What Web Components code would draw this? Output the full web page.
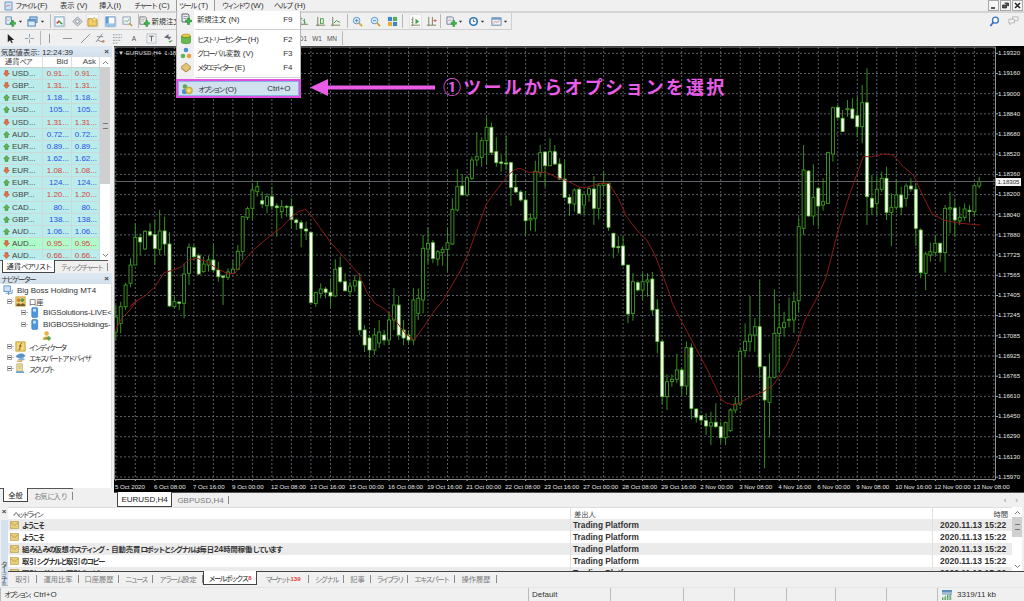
<!DOCTYPE html>
<html lang="ja"><head><meta charset="utf-8"><title>MT4</title>
<style>html,body{margin:0;padding:0;background:#f0f0f0}</style></head>
<body><mt-app></mt-app>
<script>
const FS=7.3;
const jp=(s,adv=5.6)=>s.replace(/[^\x00-\x7f]+/g,m=>m.replace(/[\u3040-\u30ff]+|[^\u3040-\u30ff]+/g,r=>/[\u3040-\u30ff]/.test(r)?`<span style="font-size:${FS}px;letter-spacing:${(adv-FS).toFixed(2)}px">${r}</span>`:`<span style="font-size:${FS}px">${r}</span>`));
const svg=(w,h,b)=>`<svg width="${w}" height="${h}" viewBox="0 0 12 12" style="display:block;flex:none">${b}</svg>`;
const plus=`<path d="M7.5 5h2v2h2v2h-2v2.5h-2V9h-2V7h2z" fill="#3fb54a" stroke="#1d7d2b" stroke-width=".5"/>`;
const mag=(c)=>`<circle cx="5" cy="5" r="3.6" fill="#d7e9f7" stroke="#5c93c4"/><path d="M7.5 7.5l3.5 3.5" stroke="#d9a02c" stroke-width="1.8"/><path d="M3.3 5h3.4${c?'M5 3.3v3.4':''}" stroke="#3b77ad" stroke-width=".8"/>`;
const IC={
 newchart:svg(11,11,`<path d="M1 1h6v8H1z" fill="#e6f1fb" stroke="#5d87ad"/><path d="M2 4l2 1 2-2" stroke="#c55" fill="none" stroke-width=".6"/>`+plus),
 profiles:svg(11,11,`<rect x="3" y="1" width="8" height="6" fill="#a9cbea" stroke="#4c7eb0"/><rect x="1" y="4" width="8" height="7" fill="#dce9f6" stroke="#4c7eb0"/><rect x="1" y="4" width="8" height="2" fill="#5f93c8"/>`),
 watch:svg(11,11,`<rect x="1" y="1" width="10" height="10" fill="#f4f9fd" stroke="#6c9abf"/><path d="M3 8l3-3" stroke="#d9453a" stroke-width="1.8"/><path d="M6 6l3 3" stroke="#38a13e" stroke-width="1.8"/>`),
 nav:svg(11,11,`<path d="M6 1l5 5-5 5-5-5z" fill="#d9dde0" stroke="#8b9299"/><circle cx="6" cy="6" r="2" fill="#f5f5f5" stroke="#8b9299"/>`),
 fav:svg(11,11,`<path d="M1 3h4l1 1h5v7H1z" fill="#f2cf6c" stroke="#b98d2b"/><path d="M8 1l1 2h2L9.500 4.500 10 7 8 5.600 6 7l.5-2.500L5 3h2z" fill="#f9e38a" stroke="#b98d2b" stroke-width=".5"/>`),
 term:svg(11,11,`<rect x="1" y="1" width="10" height="10" fill="#fff" stroke="#4c84b8"/><rect x="1" y="1" width="3" height="10" fill="#5b9bd5"/><rect x="1" y="8" width="10" height="3" fill="#9cc4e6"/>`),
 tester:svg(11,11,`<rect x="1" y="1" width="8" height="8" fill="#eef3f7" stroke="#8aa0b3"/><path d="M2 7l2-2 2 1 2-3" stroke="#4b9a4f" fill="none" stroke-width=".7"/><path d="M8 8l3 3" stroke="#c99a2e" stroke-width="1.6"/>`),
 order:svg(11,11,`<path d="M1 1h6l1 1v7H1z" fill="#f3f3f3" stroke="#777"/><path d="M2.500 3.500h4M2.500 5.500h3" stroke="#888" stroke-width=".7"/>`+plus),
 bar:svg(11,11,`<path d="M3 1v10M1 9h10" stroke="#6f7f55" fill="none"/><path d="M3 3h2M7 3v6M5.500 5H7M7 7h1.500" stroke="#4b9a4f" fill="none"/>`),
 candle:svg(11,11,`<path d="M3 1v10M1 10h10" stroke="#6f7f55"/><rect x="6" y="3" width="3" height="5" fill="#fff" stroke="#3a9a3a"/>`),
 line:svg(11,11,`<path d="M3 1v10M1 10h10" stroke="#6f7f55"/><path d="M4 8l3-3 4 2" stroke="#3a9a3a" fill="none"/>`),
 zin:svg(11,11,mag(1)), zout:svg(11,11,mag(0)),
 tile:svg(11,11,`<rect x="1" y="1" width="4.500" height="4.500" fill="#3f86c8"/><rect x="6.500" y="1" width="4.500" height="4.500" fill="#59ae55"/><rect x="1" y="6.500" width="4.500" height="4.500" fill="#e2b33c"/><rect x="6.500" y="6.500" width="4.500" height="4.500" fill="#3f86c8"/>`),
 sb:svg(11,11,`<path d="M3 1v10M1 10h10M3 4H1.500M3 7H1.500" stroke="#7d7d5a" fill="none"/><path d="M6 3l4 3-4 3z" fill="#3aa34a"/>`),
 as:svg(11,11,`<path d="M3 1v10M1 10h10M7 1v9" stroke="#7d7d5a" fill="none"/><path d="M8 5h3M9.500 3.500L11 5 9.500 6.500" stroke="#d9534a" fill="none"/>`),
 ind:svg(11,11,`<path d="M1 1h6l1 1v7H1z" fill="#e8edf2" stroke="#6e8296"/><path d="M2 6l2-2 2 1" stroke="#b55" fill="none" stroke-width=".6"/>`+plus),
 clock:svg(11,11,`<circle cx="6" cy="6" r="5" fill="#2e78b8"/><circle cx="6" cy="6" r="3.200" fill="#f3f7fb"/><path d="M6 3.700V6h2" stroke="#333" fill="none" stroke-width=".7"/>`),
 tpl:svg(11,11,`<rect x="1" y="2" width="10" height="8" fill="#eef3f8" stroke="#5c86ad"/><rect x="1" y="2" width="10" height="2" fill="#6d9bc6"/><path d="M2.500 8l2-2 2 1 3-2" stroke="#d9534a" fill="none" stroke-width=".7"/>`),
 caret:svg(5,5,`<path d="M2 4h8l-4 5z" fill="#333"/>`),
 cursor:svg(11,11,`<path d="M3 1v9l2.500-2 1.500 3 1.500-.7L7 7.500h3z" fill="#222"/>`),
 cross:svg(11,11,`<path d="M6 1v4M6 7v4M1 6h4M7 6h4" stroke="#8b9aa8"/>`),
 vl:svg(11,11,`<path d="M6 1v10" stroke="#8a8f94"/>`), hl:svg(11,11,`<path d="M1 6h10" stroke="#8a8f94"/>`),
 tl:svg(11,11,`<path d="M1 11L11 1" stroke="#8a8f94"/>`),
 fib:svg(11,11,`<path d="M1 10L8 1M3 8l6 2M2 4h7" stroke="#7d8790" fill="none"/><circle cx="9" cy="9" r="1.400" fill="#c98a5a"/>`),
 chan:svg(11,11,`<path d="M1 2h10M1 5h10M1 8h8M1 11h6" stroke="#8b98a3" stroke-dasharray="2 1"/>`),
 tbox:svg(11,11,`<rect x="1" y="1" width="10" height="10" fill="none" stroke="#8b98a3" stroke-dasharray="1 1"/><path d="M3.500 3.500h5M6 3.500V9" stroke="#55606a"/>`),
 arrows:svg(11,11,`<path d="M1 5l5-4v3h3l-2 3H6v-1z" fill="#667"/><path d="M11 8l-4 3V9H5" fill="#3a9a3a"/>`),
 search:svg(11,11,`<circle cx="7" cy="4.500" r="3.200" fill="#fff" stroke="#2f6fc1" stroke-width="1.400"/><path d="M4.500 7L1.500 11" stroke="#2f6fc1" stroke-width="1.800"/>`),
 chat:svg(13,11,`<path d="M5 1h6v4H7L5.500 6.500V5H5z" fill="#f4f4f4" stroke="#b5b5b5"/><path d="M1 3.500h6v4H3.500L2 9.500v-2H1z" fill="#f4f4f4" stroke="#b5b5b5"/>`),
 up:svg(7,7,`<path d="M6 1l5 5-2.500 1v4h-5V7L1 6z" fill="#62b356" stroke="#2d7a2a" stroke-width=".8"/>`),
 dn:svg(7,7,`<path d="M6 11l5-5-2.500-1V1h-5v4L1 6z" fill="#e2704a" stroke="#b5452a" stroke-width=".8"/>`),
 mail:svg(9,8,`<rect x="0" y="1" width="12" height="10" fill="#e8cf7e" stroke="#b89a45"/><path d="M0 2l6 5 6-5" stroke="#a98b3a" fill="none"/>`),
 mNew:svg(12,12,`<path d="M2 1h6l1 1v7H2z" fill="#eceff2" stroke="#667"/><path d="M3.500 3.500h4M3.500 5.500h3" stroke="#778" stroke-width=".7"/>`+plus),
 mHist:svg(12,12,`<ellipse cx="6" cy="3" rx="4.500" ry="2" fill="#e7c93f" stroke="#a48e24" stroke-width=".6"/><path d="M1.500 3v6.500C1.500 11 10.500 11 10.500 9.500V3C10.500 5 1.500 5 1.500 3z" fill="#6ab84e" stroke="#3e8a2b" stroke-width=".6"/>`),
 mGlob:svg(12,12,`<circle cx="6" cy="3" r="2.300" fill="#4a8fd0"/><circle cx="3" cy="9" r="2.300" fill="#5fb55a"/><circle cx="9" cy="9" r="2.300" fill="#e8a13a"/>`),
 mEd:svg(12,12,`<path d="M1 6l5-4 5 4-5 5z" fill="#e5c477" stroke="#a5822f" stroke-width=".7"/><path d="M1 7.500l5 3.500 5-3.500" fill="none" stroke="#a5822f" stroke-width=".7"/>`),
 mOpt:svg(12,12,`<circle cx="4" cy="3.500" r="2.300" fill="#5da85a"/><circle cx="3.500" cy="8.500" r="2.600" fill="#4a8fd0"/><circle cx="8" cy="7.500" r="3.400" fill="#e8c84a" stroke="#a68c24" stroke-width=".6"/><circle cx="8" cy="7.500" r="1.100" fill="#f8f3d5"/>`),
 root:svg(11,11,`<rect x="1" y="1" width="7" height="6" fill="#cfe2f5" stroke="#5f93c8"/><path d="M3 9h7M6 7v4M10 5v4" stroke="#5f93c8" fill="none"/>`),
 acc:svg(11,11,`<rect x="1" y="1" width="10" height="10" fill="#f0d177" stroke="#c29b33"/><circle cx="4" cy="4.500" r="2" fill="#cf7f2f"/><circle cx="8" cy="4.500" r="2" fill="#4e9c48"/><path d="M1.500 11c0-4 5-4 5 0zM6 11c0-4 5-4 5 0z" fill="#7b5b2a"/>`),
 srv:svg(11,11,`<rect x="3" y="0.500" width="6.500" height="11" rx="1.500" fill="#4d97dd" stroke="#2f6fb0" stroke-width=".6"/><rect x="4.500" y="2" width="3" height="3" fill="#cfe6fa"/>`),
 user:svg(10,11,`<circle cx="5.500" cy="3.500" r="2.700" fill="#e8b23c"/><path d="M1 11c0-5 9-5 9 0z" fill="#d69a2a"/><path d="M7 7h2v1.500h1.500v2H9V12H7v-1.500H5.500v-2H7z" fill="#42a84a"/>`),
 indi:svg(11,11,`<rect x="1" y="1" width="10" height="10" fill="#f1d87c" stroke="#c39c34"/><path d="M7.500 2.500C6 2.500 6 4 5.800 5.500L5 9.500H3.800M4.300 5.500h3" fill="none" stroke="#8a5a10"/>`),
 ea:svg(11,11,`<path d="M1 5c3-4 8-4 10-1-2 3-7 3-10 1z" fill="#5a93c8" stroke="#38709f" stroke-width=".5"/><path d="M3 8c2-2 6-2 8 0-2 2-6 2-8 0z" fill="#8cb2d2"/><path d="M2 10h6" stroke="#d7a43a" stroke-width="1.400"/>`),
 scr:svg(11,11,`<path d="M2 1h6v8H2z" fill="#f2e3ac" stroke="#a88f3c" stroke-width=".7"/><path d="M1 10h9" stroke="#4c8fcb" stroke-width="1.500"/><path d="M3.500 3.500h3M3.500 5.500h3" stroke="#a88f3c" stroke-width=".6"/>`),
 net:svg(16,10,`<path d="M0 12V9h1v3zM2 12V8h1v4zM4 12V7h1v5zM6 12V6h1v6zM8 12V5h1v7zM10 12V4h1v8z" fill="#3e8f4a"/><path d="M0 0h12v3H0z" fill="#5b8fc0"/><path d="M0 3h12v3H0z" fill="#87a9c7" opacity=".7"/>`)
};
function def(name,css,html,extra){
 customElements.define(name,class extends HTMLElement{
  constructor(){super();this.attachShadow({mode:'open'});
   this.shadowRoot.innerHTML=`<style>${css}</style>`+(typeof html==='function'?html(this):html);
   if(extra)extra(this.shadowRoot,this);}
 });
}
/* tab */
def('mt-tab',`:host{display:flex;align-items:center;justify-content:center;box-sizing:border-box;height:100%;color:#7a7a7a;white-space:nowrap;
 background:linear-gradient(#8a8a8a,#8a8a8a) no-repeat right center/1px 8px}
 :host([active]){background:#fff;color:#222;border:1px solid #444;border-top:0;margin-top:-1px;height:calc(100% + 1px)}`,`<slot></slot>`);
/* scrollbar */
def('mt-scroll',`:host{display:flex;flex-direction:column;background:#fff;width:var(--w,10px);flex:none;box-sizing:border-box}
 .b{height:var(--bh,10px);display:flex;align-items:center;justify-content:center;background:#fff;flex:none}
 .t{height:var(--th,100px);background:#cfcfcf;display:flex;align-items:center;justify-content:center;flex:none}
 .g{width:5px;height:4px;border-top:1px solid #777;border-bottom:1px solid #777;position:relative}.s{flex:1}`,
 `<div class="b"><svg width="7" height="5" viewBox="0 0 7 5"><path d="M1 4l2.500-2.500L6 4" fill="none" stroke="#777"/></svg></div><div class="t"><div class="g"></div></div><div class="s"></div><div class="b"><svg width="7" height="5" viewBox="0 0 7 5"><path d="M1 1l2.500 2.500L6 1" fill="none" stroke="#777"/></svg></div>`);
/* panel title */
def('mt-title',`:host{display:flex;align-items:center;justify-content:space-between;height:11px;background:linear-gradient(#dfe9f3,#d3e0ec);color:#333;padding:0 3px 0 1px;flex:none;white-space:nowrap}
 b{font:bold 8px "Liberation Sans";color:#444}`,`<span><slot></slot></span><b>×</b>`);
/* menu bar */
def('mt-menubar',`:host{display:flex;height:11px;border-bottom:2px solid #d4d4d4;align-items:center;position:relative;background:#f0f0f0;color:#333;flex:none;box-sizing:content-box}
 .i{flex:none;height:11px;line-height:11px;white-space:nowrap;box-sizing:border-box}
 .on{border:1px solid #9a9a9a;border-top:0;border-bottom:0;background:#f4f4f4;padding-left:2px}
 .wc{margin-left:auto;display:flex;gap:1px;margin-right:1px}.wc span{width:11px;height:11px;border:1px solid #a8a8a8;box-sizing:border-box;display:flex;align-items:center;justify-content:center;background:#f6f6f6}
 svg{display:block}`,
 ()=>`<div class="i" style="width:15px"><svg width="9" height="10" viewBox="0 0 9 10" style="margin:1px 0 0 4px"><path d="M1 1h7v8H1z" fill="#cfe2f5" stroke="#6d9bc6"/><path d="M2 6l2-2 2 1" fill="none" stroke="#c66" stroke-width=".7"/></svg></div>
 <div class="i" style="width:45px">${jp('ファイル (F)',5)}</div><div class="i" style="width:39px">${jp('表示 (V)')}</div><div class="i" style="width:35px">${jp('挿入(I)')}</div><div class="i" style="width:42px">${jp('チャート (C)')}</div>
 <div class="i on" style="width:39px">${jp('ツール (T)')}</div><div class="i" style="width:52px;margin-left:7px">${jp('ウィンドウ (W)',5.3)}</div><div class="i">${jp('ヘルプ (H)',6)}</div>
 <div class="wc"><span><svg width="7" height="7" viewBox="0 0 7 7"><path d="M1 6h4" stroke="#222" stroke-width="1.500"/></svg></span><span><svg width="7" height="7" viewBox="0 0 7 7"><path d="M2.500 1h4v3h-1M.5 3h4v3h-4z" fill="#555" stroke="#222" stroke-width=".7"/></svg></span><span><svg width="7" height="7" viewBox="0 0 7 7"><path d="M1 1l5 5M6 1L1 6" stroke="#222" stroke-width="1.500"/></svg></span></div>`);
/* toolbars */
function placed(list){let end=0,out='';for(const [x,k,o] of list){const w=k==='sep'?1:(o&&o.w)||(k==='caret'?5:13);const l=x-w/2-end;end=x+w/2;
 if(k==='sep')out+=`<span class="sep" style="margin-left:${l}px"></span>`;
 else if(k==='txt')out+=`<span class="tx" style="width:${w}px;margin-left:${l}px">${o.t}</span>`;
 else out+=`<span class="b${o&&o.on?' on':''}" style="width:${w}px;margin-left:${l}px">${IC[k]}${o&&o.t?`<span class="lb">${o.t}</span>`:''}</span>`;}
 return out;}
def('mt-toolbar',`:host{display:block;height:33px;flex:none;background:#f0f0f0;overflow:hidden}
 .r{display:flex;align-items:center;height:16px;white-space:nowrap}
 .r1{border-bottom:1px solid #d0d0d0;width:512px;box-sizing:border-box;border-right:1px solid #cfcfcf;height:17px}
 .b{height:14px;display:flex;align-items:center;justify-content:center;flex:none;box-sizing:border-box}
 .on{background:#fbfbfb;border:1px solid #e4e4e4}
 .sep{width:1px;height:14px;background:#b8b8b8;flex:none}
 .tx{flex:none;text-align:center;font-size:6.500px;color:#555}
 .lb{margin-left:1px;color:#333}
 .right{display:flex;flex:1;justify-content:flex-end;gap:7px;padding-right:4px;align-items:center}
 .wrap{display:flex;height:17px}`,
 ()=>`<div class="wrap"><div class="r r1">${placed([[10,'newchart'],[20,'caret'],[32,'profiles'],[42,'caret'],[50,'sep'],[59,'watch',{on:1}],[77,'nav'],[92,'fav',{on:1}],[110,'term',{on:1}],[127,'tester'],[138,'sep'],[160,'order',{t:jp('新規注文'),w:32}],[303,'bar'],[320,'candle'],[335,'line'],[347,'sep'],[357,'zin'],[375,'zout'],[392,'tile'],[402,'sep'],[415,'sb',{on:1}],[431,'as'],[440,'sep'],[451,'ind'],[460,'caret'],[473,'clock'],[482,'caret'],[496,'tpl'],[505,'caret']])}</div><div class="right">${IC.search}${IC.chat}</div></div>
 <div class="r" style="height:16px">${placed([[10,'cursor'],[29,'cross'],[40,'sep'],[49,'vl'],[67,'hl'],[85,'tl'],[100,'fib'],[117,'chan'],[134,'txt',{t:'A'}],[151,'tbox'],[168,'arrows'],[303,'txt',{t:'D1'}],[317,'txt',{t:'W1'}],[332,'txt',{t:'MN'}],[342,'sep']])}</div>`);
/* market watch */
const rows=[['USD...','0.91...',0],['GBP...','1.31...',0],['EUR...','1.18...',1],['USD...','105...',1],['USD...','1.31...',0],['AUD...','0.72...',1],['EUR...','0.89...',1],['EUR...','1.62...',1],['EUR...','1.08...',0],['EUR...','124...',1],['GBP...','1.20...',0],['CAD...','80...',1],['GBP...','138...',1],['AUD...','1.06...',1],['AUD...','0.95...',0,1],['AUD...','0.66...',0]];
def('mt-watch',`:host{display:flex;flex-direction:column;height:226px;width:112px;flex:none;background:#f0f0f0}
 .body{display:flex;height:203px;overflow:hidden;flex:none}
 .tbl{width:100px;flex:none;overflow:hidden}
 .h,.row{display:grid;grid-template-columns:43px 29px 28px;box-sizing:border-box}
 .h{background:#fff;color:#444;line-height:10px;border-bottom:1px solid #cfcfcf;height:11px}
 .h>span{text-align:right;padding-right:3px;border-right:1px solid #ddd;white-space:nowrap;overflow:hidden}.h>span:first-child{text-align:left;padding-left:5px;padding-right:0}
 .row{height:12.150px;background:#b9ecea;border-bottom:1px solid #cdd9d9;line-height:11px}
 .row.g{background:#b0fbca}
 .row>span{text-align:right;padding-right:2px;border-right:1px solid #cdd9d9;white-space:nowrap;overflow:hidden}
 .row>span:first-child{display:flex;align-items:center;gap:2px;padding-left:3px;color:#444;text-align:left}
 .u>span:not(:first-child){color:#2c4fe8}.d>span:not(:first-child){color:#d9433c}
 .tabs{display:flex;height:12px;border-top:1px solid #555;padding-left:2px;flex:none;width:106px;box-sizing:content-box}
 mt-scroll{--w:10px;--bh:10px;--th:117px}`,
 ()=>`<mt-title>${jp('気配値表示:')} 12:24:39</mt-title><div class="body"><div class="tbl"><div class="h"><span>${jp('通貨ペア',6)}</span><span>Bid</span><span>Ask</span></div>
 ${rows.map(r=>`<div class="row ${r[2]?'u':'d'} ${r[3]?'g':''}"><span>${r[2]?IC.up:IC.dn}${r[0]}</span><span>${r[1]}</span><span>${r[1]}</span></div>`).join('')}</div><mt-scroll></mt-scroll></div>
 <div class="tabs"><mt-tab active style="width:53px">${jp('通貨ペアリスト',5.9)}</mt-tab><mt-tab style="width:53px">${jp('ティックチャート',5.25)}</mt-tab></div>`);
/* navigator */
def('mt-tree',`:host{display:flex;align-items:center;height:11.200px;white-space:nowrap;padding-left:var(--in,0);color:#333}
 .box{width:5px;height:5px;border:1px solid #aaa;box-sizing:border-box;background:#fff;flex:none;position:relative}
 .box:after{content:"";position:absolute;left:0;top:1px;width:3px;height:1px;background:#555}
 .ln{width:2px;height:1px;flex:none;margin-right:1px;background:#bbb}
 .ic{display:flex;margin-right:3px;flex:none}`,
 t=>`${t.hasAttribute('box')?'<span class="box"></span><span class="ln"></span>':''}<span class="ic">${IC[t.getAttribute('ic')]}</span><span><slot></slot></span>`);
def('mt-nav',`:host{display:flex;flex-direction:column;height:230px;width:112px;flex:none;margin-top:1px;background:#f0f0f0;overflow:hidden}
 .tree{height:204px;background:#fff;flex:none;padding-top:1px;box-sizing:border-box;overflow:hidden;border-right:1px solid #ddd}
 .tabs{display:flex;height:13px;border-top:1px solid #555;padding-left:3px;width:70px;flex:none}
 .foot{flex:1;background:#f0f0f0}`,
 ()=>`<mt-title>${jp('ナビゲーター',5.67)}</mt-title><div class="tree">
 <mt-tree ic="root" style="--in:3px">Big Boss Holding MT4</mt-tree>
 <mt-tree box ic="acc" style="--in:7px">${jp('口座')}</mt-tree>
 <mt-tree box ic="srv" style="--in:20px;letter-spacing:-.15px;margin-left:1px">BIGSolutions-LIVE&lt;</mt-tree>
 <mt-tree box ic="srv" style="--in:20px;letter-spacing:-.15px;margin-left:1px">BIGBOSSHoldings-</mt-tree>
 <mt-tree ic="user" style="--in:42px"></mt-tree>
 <mt-tree box ic="indi" style="--in:7px">${jp('インディケータ',5.3)}</mt-tree>
 <mt-tree box ic="ea" style="--in:7px">${jp('エキスパートアドバイザ',5.6)}</mt-tree>
 <mt-tree box ic="scr" style="--in:7px">${jp('スクリプト',4.8)}</mt-tree>
 </div><div class="tabs"><mt-tab active style="width:25px">${jp('全般')}</mt-tab><mt-tab style="width:45px">${jp('お気に入り',6)}</mt-tab></div><div class="foot"></div>`);
/* chart */
const A=[[0,650,700,635,730],[0,585,650,578,660],[0,525,580,505,592],[0,442,525,400,525],[1,442,456,430,497],[0,424,477,420,480],[1,425,435,400,440],[1,434,475,390,525],[0,423,478,360,495],[1,423,462,380,495],[1,462,648,427,650],[0,635,650,620,655],[1,636,640,635,660],[0,552,640,520,685],[0,472,550,460,585],[1,473,500,465,510],[1,497,552,490,555],[0,522,545,500,548],[0,510,525,497,545],[1,510,540,465,545],[1,540,560,515,575],[1,558,562,555,645],[0,546,562,535,570],[0,538,550,510,552],[0,484,538,465,540],[0,380,484,378,510],[0,356,382,350,390],[0,300,355,280,390],[0,290,305,272,320],[1,332,342,305,355],[0,320,347,310,370],[1,320,348,290,360],[1,348,353,340,440],[0,350,365,330,385],[1,349,352,345,380],[1,349,388,325,415],[1,390,398,385,420],[1,398,415,390,472],[1,417,423,395,450],[1,427,638,425,640],[0,608,640,605,650],[0,597,610,580,625],[1,597,607,590,625],[1,607,618,565,650],[0,538,618,508,620],[1,532,575,500,580],[1,575,602,550,605],[0,588,605,575,620],[0,572,588,555,605],[1,573,720,550,735]];
const B=[[1,330,345,325,352],[1,338,350,335,358],[0,335,350,328,355],[0,332,343,320,348],[1,335,340,330,345],[0,320,340,312,345],[0,305,320,288,330],[1,305,335,296,340],[1,330,338,320,345],[1,335,340,330,343],[0,300,340,288,345]];
const C=[[0,595,640,565,660],[0,445,600,405,640],[0,430,447,382,490],[1,428,475,420,490],[0,455,477,450,497],[0,448,458,440,497],[0,428,448,382,515],[0,328,432,295,435],[0,260,330,207,335],[1,258,285,222,285],[0,233,285,228,285],[0,180,235,170,240],[0,170,180,97,198],[0,122,172,112,200],[0,82,122,52,195],[1,82,158,68,165],[1,155,188,112,200],[1,186,190,165,215],[1,189,192,108,210],[1,188,262,185,318],[1,262,276,222,280],[1,276,300,270,305],[1,300,362,272,408],[0,355,360,340,392],[0,214,355,182,395],[0,158,218,135,232],[1,156,197,155,262],[0,155,197,115,198],[1,155,192,135,195],[1,192,237,175,240],[1,237,292,180,295],[1,292,310,285,347],[0,270,312,265,335],[1,268,340,262,342],[0,283,315,280,345],[0,266,284,262,305],[1,267,325,228,375],[0,256,325,250,358],[0,250,256,212,285],[1,250,382,248,392],[1,400,442,398,475],[1,440,442,408,460],[1,438,495,410,498]];
const D=[[1,-45,102,-45,130],[0,5,100,-20,122],[1,8,30,2,35],[0,5,30,-20,60],[0,0,6,-20,50],[1,-3,90,-24,105],[1,88,185,58,220],[1,185,350,180,372],[0,305,350,283,390],[0,298,305,283,320],[0,270,298,222,310],[1,270,318,265,350],[0,203,318,185,345],[1,203,385,190,418],[1,387,412,385,428],[1,407,420,405,435],[1,422,438,400,465],[0,428,438,395,495],[1,427,440,370,445],[1,440,473,425,490],[0,428,473,425,495],[0,390,452,385,455],[0,372,390,352,400],[0,214,372,205,378],[0,184,212,130,232],[0,165,185,48,215],[0,140,165,115,215],[1,140,260,0,295],[1,260,360,258,565],[0,292,367,220,472],[0,160,292,28,295],[0,143,160,72,275],[0,128,143,95,170],[0,118,120,52,142],[0,65,120,35,160]];
const E=[[0,500,722,472,756],[0,330,505,255,525],[1,333,468,330,470],[0,412,468,313,495],[1,385,438,380,500],[0,425,435,355,452],[0,278,430,275,432],[0,143,282,140,305],[1,142,172,135,178],[1,175,215,150,215],[0,146,148,120,170],[1,147,175,115,178],[1,167,200,110,232],[0,128,200,75,250],[1,128,410,25,495],[1,415,442,345,465],[0,388,430,350,465],[0,355,388,335,395],[1,355,457,320,480],[0,442,457,400,558],[0,405,442,358,450],[1,405,442,380,465],[0,378,415,370,440],[1,378,387,355,395],[1,388,505,370,558],[1,510,638,505,655],[0,582,640,575,690],[0,575,585,548,605],[0,550,578,525,585],[1,550,578,548,605],[0,445,578,435,638],[0,443,447,395,520],[1,444,480,415,530],[0,472,483,440,495],[0,447,472,430,482],[1,451,455,435,487],[0,377,455,375,470],[0,365,378,350,385]];
const conv=(a,o)=>a.map(r=>[r[0],o+r[1]/3,o+r[2]/3,o+r[3]/3,o+r[4]/3]);
const K=[[0,317,332,305,340],...conv(A,90),...B,...conv(C,100),...conv(D,280),...conv(E,60)];
const ma=[[115,331],[122,318],[130,310],[137,300]];
const pm=(l,ox,oy)=>l.forEach(p=>ma.push([ox+p[0]/3,oy+p[1]/3]));
pm([[60,650],[80,632],[105,618],[135,590],[162,548],[190,540],[215,530],[235,510],[262,505],[290,515],[320,535],[355,552],[375,550],[400,515],[430,480],[465,450],[490,430],[515,412],[545,380],[565,365],[588,358],[610,385],[660,455],[700,500],[745,550],[770,605],[795,640],[825,658]],110,90);
ma.push([395,320],[405,333],[414,340],[425,325],[435,310]);
pm([[100,600],[120,565],[150,515],[175,460],[200,390],[230,310],[260,270],[295,225],[315,208],[330,205],[355,217],[385,216],[410,218],[440,232],[470,242],[510,262],[530,262],[570,250],[597,250],[625,295],[650,350],[680,390],[710,420],[735,465],[760,530],[785,600]],410,100);
pm([[215,65],[240,115],[280,190],[320,265],[365,360],[380,370],[405,375],[450,352],[490,335],[520,315],[560,255],[590,190],[615,120],[650,55],[675,0]],600,280);
pm([[350,645],[385,510],[420,400],[460,290],[485,290],[520,282],[550,285],[580,320],[610,345],[640,410],[665,460],[700,480],[750,490],[810,495]],710,60);
const prices=['1.19320','1.19160','1.19000','1.18840','1.18680','1.18520','1.18360','1.18200','1.18040','1.17880','1.17725','1.17565','1.17405','1.17245','1.17085','1.16925','1.16765','1.16610','1.16450','1.16290','1.16130','1.15970'];
const dates=['5 Oct 2020','6 Oct 08:00','7 Oct 16:00','9 Oct 00:00','12 Oct 08:00','13 Oct 16:00','15 Oct 00:00','16 Oct 08:00','19 Oct 16:00','21 Oct 00:00','22 Oct 08:00','23 Oct 16:00','27 Oct 00:00','28 Oct 08:00','29 Oct 16:00','2 Nov 00:00','3 Nov 08:00','4 Nov 16:00','6 Nov 00:00','9 Nov 08:00','10 Nov 16:00','12 Nov 00:00','13 Nov 08:00'];
function chartSvg(){
 let s='';const xOf=i=>120.7+4.878*i;const G='#5a6066';
 for(let k=0;k<22;k++){const y=(53.3+20.18*k).toFixed(1);s+=`<path d="M116 ${y}H995" stroke="${G}" stroke-dasharray="2 2"/><path d="M995 ${y}h3" stroke="#aaa"/>`;}
 for(let i=-1;i<=180;i+=4){const x=xOf(i).toFixed(1);if(x<995){s+=`<path d="M${x} 47V479" stroke="${G}" stroke-dasharray="2 2"/><path d="M${x} 479v2" stroke="#aaa"/>`;}}
 s+=`<path d="M115 181.500H995" stroke="#5f6266"/>`;
 K.forEach((c,j)=>{const x=xOf(j-1);
  s+=`<path d="M${x.toFixed(1)} ${c[3].toFixed(1)}V${c[4].toFixed(1)}" stroke="#358f1c"/>`;
  const h=Math.max(1,c[2]-c[1]);
  s+=c[0]?`<rect x="${(x-1.5).toFixed(1)}" y="${c[1].toFixed(1)}" width="3" height="${h.toFixed(1)}" fill="#fbfff6" stroke="#62c23c" stroke-width=".8"/>`
   :`<rect x="${(x-1.5).toFixed(1)}" y="${c[1].toFixed(1)}" width="3" height="${h.toFixed(1)}" fill="#000" stroke="#3f9c22" stroke-width=".9"/>`;
 });
 s+=`<path d="M${ma.map(p=>p[0].toFixed(1)+' '+p[1].toFixed(1)).join('L')}" fill="none" stroke="#8a1a16" stroke-width="1"/>`;
 s+=`<path d="M114.500 47V479.500H995.500V47H114.500" fill="none" stroke="#8d8d8d"/>`;
 return `<svg width="882" height="434" viewBox="114 46 882 434" style="display:block;overflow:visible">${s}</svg>`;
}
def('mt-chart',`:host{display:flex;flex-direction:column;flex:1;min-width:0;height:461px}
 .pane{height:446px;background:#000;display:grid;grid-template-columns:882px 28px;grid-template-rows:434px 12px;position:relative;overflow:hidden;flex:none;border-bottom:1px solid #555;box-sizing:content-box;font:6.100px "Liberation Sans",sans-serif;color:#e8e8e8}
 .px{display:flex;flex-direction:column;margin-top:-2.800px;padding-left:2px;white-space:nowrap}.px span{height:20.180px;line-height:20.180px;flex:none}
 .dt{grid-column:1/3;display:flex;padding-left:1px;white-space:nowrap;align-items:center;height:12px;overflow:hidden}.dt span{width:39.030px;flex:none}
 .cur{position:absolute;left:882px;top:132px;width:25px;height:8px;line-height:8px;background:#f4f4f4;color:#333;text-align:center}
 .lbl{position:absolute;left:4px;top:3px;color:#cfcfcf;white-space:nowrap}
 .tabs{display:flex;height:13px;padding-left:3px;align-items:stretch;flex:1;background:#f0f0f0;position:relative}
 .arr{margin-left:auto;display:flex;gap:9px;align-items:center;padding-right:6px;color:#888}`,
 ()=>`<div class="pane"><div>${chartSvg()}</div><div class="px">${prices.map(p=>`<span>${p}</span>`).join('')}</div>
 <div class="dt">${dates.map(p=>`<span>${p}</span>`).join('')}</div><div class="cur">1.18305</div><div class="lbl">▼ EURUSD,H4&nbsp; 1.182</div></div>
 <div class="tabs"><mt-tab active style="width:55px">EURUSD,H4</mt-tab><mt-tab style="width:57px">GBPUSD,H4</mt-tab><div class="arr"><span>‹</span><span>›</span></div></div>`);
/* terminal */
const news=[['ようこそ',5.3],['ようこそ',5.3],['組み込みの仮想ホスティング - 自動売買ロボットとシグナルは毎日24時間稼働しています',5.9],['取引シグナルと取引のコピー',5.9],['取引シグナルと取引のコピー',5.9]];
const tabsA=[['取引',29],['運用比率',42],['口座履歴',40],['ニュース',34,5.5],['アラーム設定',50,5.75]];
const tabsB=[['シグナル',35,5.75],['記事',27],['ライブラリ',37,5.2],['エキスパート',47,5.83],['操作履歴',42]];
const tabH=t=>`<mt-tab style="width:${t[1]}px">${jp(t[0],t[2]||5.6)}</mt-tab>`;
def('mt-terminal',`:host{display:flex;height:79px;flex:none;background:#f0f0f0;overflow:hidden}
 .side{width:8px;flex:none;display:flex;flex-direction:column;align-items:center}
 .side b{font:bold 8px "Liberation Sans";color:#444;height:9px;line-height:9px}
 .side span.v{flex:1;width:7px;background:#d4e2ef;writing-mode:vertical-rl;display:flex;align-items:center;justify-content:flex-end;overflow:hidden;line-height:7px;color:#444;white-space:nowrap;margin:4px 0 0}
 .col{flex:1;min-width:0;display:flex;flex-direction:column}
 .top{display:flex;height:65px;border-bottom:1px solid #444;box-sizing:border-box;overflow:hidden}
 .tbl{flex:1;min-width:0;overflow:hidden;border-top:1px solid #ddd}
 .r{display:grid;grid-template-columns:562px 362px 80px;height:12.100px;align-items:center;background:#fff;white-space:nowrap}
 .r:nth-child(even){background:#ebebeb}
 .r>div{padding:0 5px 0 3px;height:100%;display:flex;align-items:center;box-sizing:border-box;border-left:1px solid #e0e0e0;overflow:hidden}.r>div:first-child{border-left:0;gap:3px;padding-left:2px}
 .r.hd{height:11px;color:#444}.hd>div:first-child{padding-left:5px}.hd>div:last-child{justify-content:flex-end;padding-right:4px}
 .d{font:bold 8.300px "Liberation Sans","Noto Sans CJK JP",sans-serif;color:#333}
 .d>div:last-child{font-size:8.500px;padding-left:7px;padding-right:0}
 .d>div:nth-child(2){padding-left:2px}
 mt-scroll{--w:10px;--bh:10px;--th:20px;margin-right:2px}
 .tabs{display:flex;height:13px;flex:none}
 sub{color:#e23b3b;font:bold 6px "Liberation Sans";vertical-align:-1px;margin-left:1px}`,
 ()=>`<div class="side"><b>×</b><span class="v">${jp('ターミナル',5)}</span></div><div class="col"><div class="top"><div class="tbl"><div class="r hd"><div>${jp('ヘッドライン',4.7)}</div><div>${jp('差出人')}</div><div>${jp('時間')}</div></div>
 ${news.map(n=>`<div class="r d"><div>${IC.mail}<span>${jp(n[0],n[1])}</span></div><div>Trading Platform</div><div>2020.11.13 15:22</div></div>`).join('')}</div><mt-scroll></mt-scroll></div>
 <div class="tabs">${tabsA.map(tabH).join('')}
 <mt-tab active style="width:54px">${jp('メールボックス',5.57)}<sub>8</sub></mt-tab><mt-tab style="width:52px">${jp('マーケット',4.8)}<sub>139</sub></mt-tab>
 ${tabsB.map(tabH).join('')}</div></div>`);
/* status */
def('mt-status',`:host{display:grid;grid-template-columns:528px 82px 73px 51px 52px 49px 51px 51px 1fr;height:14px;border-top:1px solid #e4e4e4;box-sizing:border-box;margin-top:1px;flex:none;align-items:center;color:#333;background:#f0f0f0}
 div{height:13px;line-height:13px;white-space:nowrap;padding-left:3px;box-sizing:border-box;border-left:1px solid #bbb}
 div:first-child{border-left:0;padding-left:0}
 .n{display:flex;align-items:center;gap:2px;padding-left:1px}`,
 ()=>`<div>${jp('オプション,',5)} Ctrl+O</div><div>Default</div><div></div><div></div><div></div><div></div><div></div><div></div><div class="n">${IC.net}3319/11 kb</div>`);
/* drop-down */
def('mt-menu',`:host{position:absolute;left:176px;top:11px;width:125px;height:85px;background:linear-gradient(90deg,#f0f0f0 17px,#fff 17px);display:block;box-sizing:border-box;border:1px solid #b5b5b5;border-top:0;color:#333;z-index:5}
 .i{display:grid;grid-template-columns:16px 1fr auto;align-items:center;height:14px;padding-right:7.500px;white-space:nowrap}
 .i>span:first-child{display:flex;justify-content:center;padding-left:1px}
 .i>span:nth-child(2){padding-left:4px}
 .s{height:6px;margin-left:18px;background:linear-gradient(#d0d0d0,#d0d0d0) no-repeat center/100% 1px}
 .o{box-sizing:border-box;height:19px;margin:-1px -1px 0;width:125px;border:2px solid #e04fe0;background:#cfe0ee;box-shadow:inset 0 0 0 1px #85b5dc;padding-right:8.500px}`,
 ()=>`<div class="i" style="margin-top:1px"><span>${IC.mNew}</span><span>${jp('新規注文 (N)')}</span><span>F9</span></div><div class="s"></div>
 <div class="i"><span>${IC.mHist}</span><span>${jp('ヒストリーセンター (H)',5.4)}</span><span>F2</span></div>
 <div class="i"><span>${IC.mGlob}</span><span>${jp('グローバル変数 (V)',5.8)}</span><span>F3</span></div>
 <div class="i"><span>${IC.mEd}</span><span>${jp('メタエディター (E)',5.1)}</span><span>F4</span></div><div class="s"></div>
 <div class="i o"><span>${IC.mOpt}</span><span>${jp('オプション (O)',5)}</span><span>Ctrl+O</span></div>`);
/* annotation */
def('mt-note',`:host{position:absolute;left:310px;top:74px;display:flex;align-items:center;height:24px;z-index:6;color:#e85ce8;white-space:nowrap}
 span{font:bold 18px "Noto Sans CJK JP",sans-serif;letter-spacing:2.250px;margin-left:7px;line-height:24px}`,
 `<svg width="126" height="20" viewBox="0 0 126 20" style="display:block"><path d="M0 11.500L18 3v6.500H125v4H18V20z" fill="#e85ce8"/></svg><span><slot></slot></span>`);
def('mt-app',`:host{display:flex;flex-direction:column;width:1024px;height:601px;overflow:hidden;position:relative;background:#f0f0f0;font:8px "Liberation Sans","Noto Sans CJK JP",sans-serif;color:#333}
 .main{display:flex;height:461px;flex:none}.left{width:114px;flex:none;display:flex;flex-direction:column}`,
 `<mt-menubar></mt-menubar><mt-toolbar></mt-toolbar><div class="main"><div class="left"><mt-watch></mt-watch><mt-nav></mt-nav></div><mt-chart></mt-chart></div>
 <mt-terminal></mt-terminal><mt-status></mt-status><mt-menu></mt-menu><mt-note>①ツールからオプションを選択</mt-note>`);
</script></body></html>
